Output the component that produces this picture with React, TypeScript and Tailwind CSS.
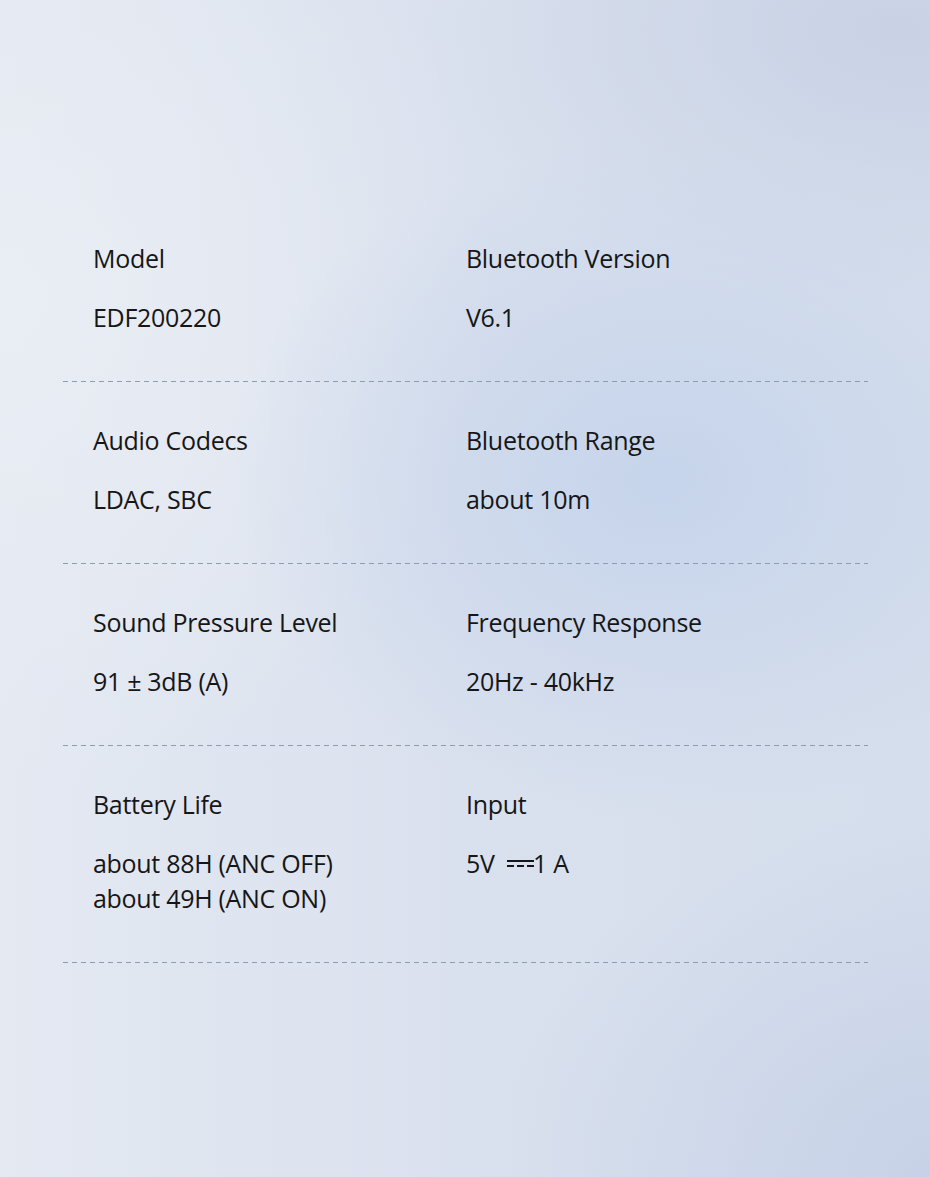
import type { ReactNode } from 'react'

type Spec = { label: string; value: ReactNode }

function DcSymbol() {
  return (
    <svg width="27" height="10" viewBox="0 0 27 10" className="inline-block align-[2px]">
      <rect x="0" y="1" width="27" height="2" fill="#161616" />
      <rect x="0" y="6" width="7" height="2" fill="#161616" />
      <rect x="10" y="6" width="7" height="2" fill="#161616" />
      <rect x="20" y="6" width="7" height="2" fill="#161616" />
    </svg>
  )
}

const rows: [Spec, Spec][] = [
  [
    { label: 'Model', value: 'EDF200220' },
    { label: 'Bluetooth Version', value: 'V6.1' },
  ],
  [
    { label: 'Audio Codecs', value: 'LDAC, SBC' },
    { label: 'Bluetooth Range', value: 'about 10m' },
  ],
  [
    { label: 'Sound Pressure Level', value: '91 ± 3dB (A)' },
    { label: 'Frequency Response', value: '20Hz - 40kHz' },
  ],
  [
    {
      label: 'Battery Life',
      value: (
        <>
          about 88H (ANC OFF)
          <br />
          about 49H (ANC ON)
        </>
      ),
    },
    {
      label: 'Input',
      value: (
        <span className="inline-flex items-center">
          5V&nbsp;&nbsp;
          <DcSymbol />
          <span className="-ml-[1px]">1&nbsp;A</span>
        </span>
      ),
    },
  ],
]

function Cell({ spec }: { spec: Spec }) {
  return (
    <div className="flex flex-col gap-[24px]">
      <span>{spec.label}</span>
      <span>{spec.value}</span>
    </div>
  )
}

export default function App() {
  return (
    <main
      className="relative h-[1177px] w-[930px] overflow-hidden bg-[#dce3ee] bg-[radial-gradient(ellipse_430px_340px_at_660px_480px,#c6d4eb_0%,rgba(198,212,235,0)_100%),radial-gradient(ellipse_480px_380px_at_960px_1190px,#c6d1e7_0%,rgba(198,209,231,0)_100%),radial-gradient(ellipse_480px_280px_at_900px_30px,#c9d2e5_0%,rgba(201,210,229,0)_100%),radial-gradient(ellipse_500px_500px_at_0px_300px,#e9edf4_0%,rgba(233,237,244,0)_100%),linear-gradient(to_right,#e4e9f2_0%,#dae1ee_50%,#d5deec_100%)] pt-[200px] text-[25px] leading-[35px] tracking-[-0.3px] text-[#161616]"
      style={{ fontFamily: '"Open Sans", "Noto Sans", sans-serif' }}
    >
      <div className="mx-[59px] w-[809px]">
        {rows.map((pair, i) => (
          <section
            key={i}
            className="grid grid-cols-[373px_1fr] bg-[linear-gradient(to_right,#8e9cb2_60%,transparent_60%)] bg-[length:9px_1px] bg-bottom bg-repeat-x pt-[41px] pb-[47px] pl-[34px]"
          >
            <Cell spec={pair[0]} />
            <Cell spec={pair[1]} />
          </section>
        ))}
      </div>
    </main>
  )
}
